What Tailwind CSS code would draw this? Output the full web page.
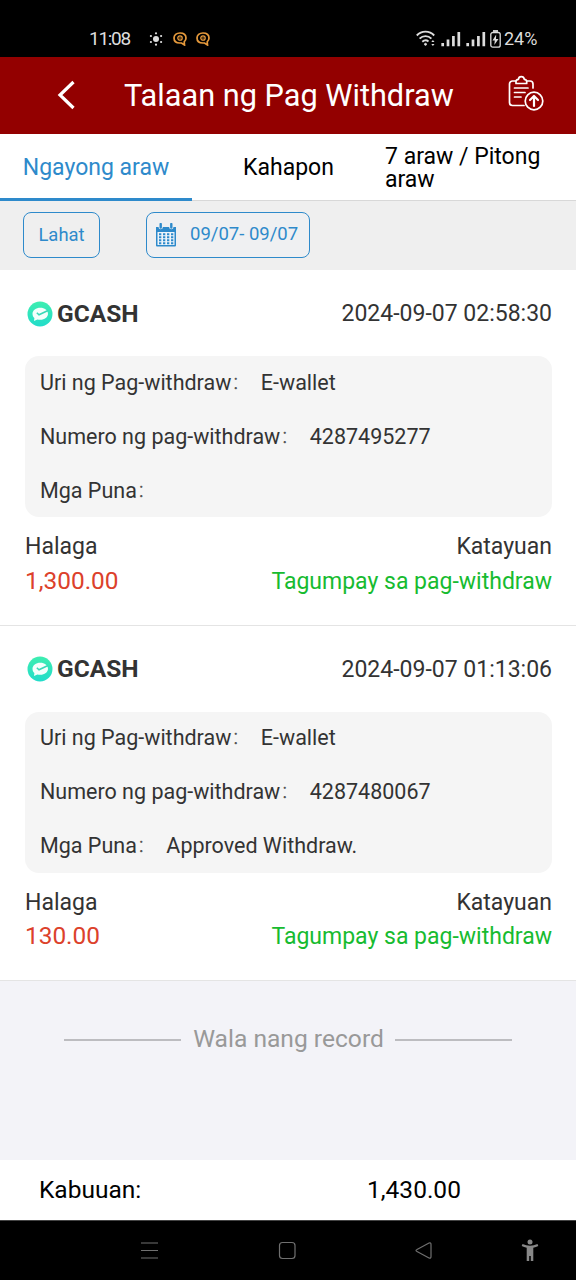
<!DOCTYPE html>
<html lang="fil">
<head>
<meta charset="utf-8">
<meta name="viewport" content="width=device-width, initial-scale=1">
<title>Talaan ng Pag Withdraw</title>
<script src="https://cdn.jsdelivr.net/npm/@tailwindcss/browser@4"></script>
</head>
<body class="w-[576px] h-[1280px] overflow-hidden bg-white font-['Roboto','Noto_Sans_CJK_SC',sans-serif] text-[#333] whitespace-nowrap">
<svg class="absolute w-0 h-0">
  <defs>
    <linearGradient id="mint" x1="0" y1="0" x2="0" y2="1"><stop offset="0" stop-color="#3eeeb0"/><stop offset="1" stop-color="#22dcca"/></linearGradient>
    <symbol id="wallet" viewBox="0 0 26 26">
      <circle cx="13" cy="13" r="12.5" fill="url(#mint)"/>
      <path d="M13.3 6.800c4.300 0 7.700 2.600 7.700 6s-3.400 6-7.700 6c-1 0-2-.1-2.900-.4L7 20l.4-2.900C6.200 16 5.500 14.500 5.500 12.800c0-3.400 3.500-6 7.800-6z" fill="#f4fffc"/>
      <path d="M9.800 11.800l2.200 2 9-4.300" fill="none" stroke="#3ad9b8" stroke-width="1.500"/>
    </symbol>
    <symbol id="chat" viewBox="0 0 14 14">
      <path d="M7 1C3.400 1 1 3 1 6s2.400 5 6 5h1.500l3 2-.3-3.200C12.400 8.800 13 7.500 13 6c0-3-2.400-5-6-5z" fill="none" stroke="#e69a3c" stroke-width="1.700"/>
      <circle cx="7" cy="6" r="2.200" fill="none" stroke="#e69a3c" stroke-width="1.300"/><circle cx="7" cy="6" r=".7" fill="#e69a3c"/>
    </symbol>
    <symbol id="bars" viewBox="0 0 20 16">
      <path d="M1.700 12v3.300M7 8.500v6.800M12.400 5v10.300M17.800 1v14.300" stroke="#ddd" stroke-width="2.700"/>
    </symbol>
  </defs>
</svg>

<div class="flex items-center h-[57px] bg-black text-[#ddd] pl-[89px] pt-5">
  <span class="text-[19px] leading-9 w-[60px] tracking-[-1.300px]">11:08</span>
  <svg class="w-[14px] h-[14px]" viewBox="0 0 14 14" fill="#ddd"><circle cx="7" cy="7" r="3"/><circle cx="7" cy="1.300" r="1.100"/><circle cx="7" cy="12.700" r="1.100"/><circle cx="1.900" cy="4" r="1.100"/><circle cx="12.100" cy="4" r="1.100"/><circle cx="1.900" cy="10" r="1.100"/><circle cx="12.100" cy="10" r="1.100"/></svg>
  <svg class="w-[14px] h-[14px] ml-[10px]"><use href="#chat"/></svg>
  <svg class="w-[14px] h-[14px] ml-[9px]"><use href="#chat"/></svg>
  <svg class="w-[20px] h-[17px] ml-[206px]" viewBox="0 0 20 17" fill="none" stroke="#ddd" stroke-width="1.900"><path d="M.8 5.500C5.500.3 13.500.3 18.200 5.500M3.600 8.700c3.300-3.400 8.500-3.400 11.800 0M6.300 11.700c2-1.800 4.400-1.800 6.200-.3"/><circle cx="9.500" cy="14.300" r="1" fill="#ddd" stroke-width="1"/><path d="M15.300 12l1.600-2 1.600 2zM15.300 14l1.600 2 1.600-2z" fill="#ddd" stroke="none"/></svg>
  <svg class="w-[20px] h-[16px] ml-[5px]"><use href="#bars"/></svg>
  <svg class="w-[20px] h-[16px] ml-[5px]"><use href="#bars"/></svg>
  <svg class="w-[11px] h-[18px] ml-[4px]" viewBox="0 0 11 18"><path d="M3 1h5" stroke="#ddd" stroke-width="1.800"/><rect x=".8" y="2.500" width="9.400" height="14.700" rx="2" fill="none" stroke="#ddd" stroke-width="1.300"/><path d="M6.200 4.500L2.500 10.500h2.300l-.5 4.500 4.200-6H6z" fill="#ddd"/></svg>
  <span class="text-[18px] leading-9 ml-[3px]">24%</span>
</div>

<header class="flex items-center h-[77px] bg-[#930000] text-white">
  <svg class="w-[18px] h-[30px] ml-[57px] mb-[2px]" viewBox="0 0 18 30" fill="none" stroke="#fff" stroke-width="3.200"><path d="M16.500 2L3 15l13.500 13"/></svg>
  <h1 class="ml-[49px] w-[384px] text-[30.700px] leading-[40px] font-normal">Talaan ng Pag Withdraw</h1>
  <svg class="w-[36px] h-[36px] mb-[6px]" viewBox="0 0 36 36" fill="none" stroke="#fff" stroke-width="1.700" stroke-linecap="round" stroke-linejoin="round"><path d="M8 6H4.500A3 3 0 0 0 1.500 9v18.500a3 3 0 0 0 3 3H16M18.500 6h3.500a3 3 0 0 1 3 3v4M8 8.500V6.300C8 5 9 4.500 10.400 4.300c.4-3.600 5.400-3.600 5.900 0 1.500.2 2.400.8 2.400 2v2.200zM6.500 13H20M6.500 17.500h10.500M6.500 22H13"/><circle cx="26" cy="26" r="8.800"/><path d="M26 31v-9M22 25l4-4 4 4" stroke-width="2.200"/></svg>
</header>

<nav class="grid grid-cols-3 h-[67px] bg-white border-b border-[#d8d8d8] text-black text-[23px] leading-[23px]">
  <div class="flex items-center justify-center text-[#2e8acb] border-b-3 border-[#2e8acb] h-[67px] pt-[2px]">Ngayong araw</div>
  <div class="flex items-center justify-center pl-px">Kahapon</div>
  <div class="flex items-center pl-[1px]"><span>7 araw / Pitong<br>araw</span></div>
</nav>

<div class="flex h-[69px] bg-[#efefef] pt-[11px] pl-[23px] text-[#2e8acb]">
  <button class="w-[77px] h-[46px] rounded-lg border border-[#2e8acb] text-[18.400px]">Lahat</button>
  <button class="flex items-center w-[164px] h-[46px] ml-[46px] pl-[8px] rounded-lg border border-[#2e8acb] bg-[#eff0f2] text-[18.500px]">
    <svg class="w-[22px] h-[24px]" viewBox="0 0 22 24"><path d="M1 4h2.500a2.200 2.200 0 0 0 4.400 0h6.200a2.200 2.200 0 0 0 4.400 0H21v18.500q0 1-1 1H2q-1 0-1-1z" fill="#2e8acb"/><path d="M2.500 9h17v13h-17z" fill="#eef4fa"/><path d="M5.700 1v3.500M16.300 1v3.500" stroke="#2e8acb" stroke-width="2.400" stroke-linecap="round"/><path d="M4 11.200h14.500M4 14.200h14.500M4 17.200h14.500M4 20.200h14.500" stroke="#2e8acb" stroke-width="2" stroke-dasharray="2.300 1.700"/></svg>
    <span class="ml-[13px]">09/07- 09/07</span>
  </button>
</div>

<section class="h-[356px] border-b border-[#e4e4e4] px-[24px]">
  <div class="flex items-center justify-between h-[86px] pt-[2px]">
    <div class="flex items-center"><svg class="w-[26px] h-[26px] ml-[3px] mr-[4px]"><use href="#wallet"/></svg><b class="text-[24.500px]">GCASH</b></div>
    <span class="text-[23px] pt-px">2024-09-07 02:58:30</span>
  </div>
  <div class="h-[161px] ml-px rounded-[14px] bg-[#f5f5f5] pl-[15px] text-[21.500px] leading-[54px]">
    <p class="h-[54px] flex"><span>Uri ng Pag-withdraw</span><i class="not-italic font-light text-[18px] text-[#555] w-[29.500px]">：</i><span>E-wallet</span></p>
    <p class="h-[54px] flex"><span>Numero ng pag-withdraw</span><i class="not-italic font-light text-[18px] text-[#555] w-[29.500px]">：</i><span>4287495277</span></p>
    <p class="h-[54px] flex"><span>Mga Puna</span><i class="not-italic font-light text-[18px] text-[#555] w-[29.500px]">：</i></p>
  </div>
  <div class="flex justify-between pl-px pt-[12px] text-[23px] leading-[35px]"><span>Halaga</span><span>Katayuan</span></div>
  <div class="flex justify-between pl-px text-[23px] leading-[35px]"><span class="text-[#dc412b] text-[24.400px] leading-[33px]">1,300.00</span><span class="text-[#17bb30]">Tagumpay sa pag-withdraw</span></div>
</section>

<section class="h-[355px] border-b border-[#e4e4e4] px-[24px]">
  <div class="flex items-center justify-between h-[86px]">
    <div class="flex items-center"><svg class="w-[26px] h-[26px] ml-[3px] mr-[4px]"><use href="#wallet"/></svg><b class="text-[24.500px]">GCASH</b></div>
    <span class="text-[23px] pt-[2px]">2024-09-07 01:13:06</span>
  </div>
  <div class="h-[161px] ml-px rounded-[14px] bg-[#f5f5f5] pl-[15px] text-[21.500px] leading-[52px]">
    <p class="h-[54px] flex"><span>Uri ng Pag-withdraw</span><i class="not-italic font-light text-[18px] text-[#555] w-[29.500px]">：</i><span>E-wallet</span></p>
    <p class="h-[54px] flex"><span>Numero ng pag-withdraw</span><i class="not-italic font-light text-[18px] text-[#555] w-[29.500px]">：</i><span>4287480067</span></p>
    <p class="h-[54px] flex"><span>Mga Puna</span><i class="not-italic font-light text-[18px] text-[#555] w-[29.500px]">：</i><span>Approved Withdraw.</span></p>
  </div>
  <div class="flex justify-between pl-px pt-[12px] text-[23px] leading-[35px]"><span>Halaga</span><span>Katayuan</span></div>
  <div class="flex justify-between pl-px text-[23px] leading-[33px]"><span class="text-[#dc412b] text-[24.400px] leading-[32px]">130.00</span><span class="text-[#17bb30]">Tagumpay sa pag-withdraw</span></div>
</section>

<div class="h-[179px] bg-[#f3f3f8] flex justify-center items-start pt-[42px] text-[24.600px] leading-[32px] text-[#999]">
  <div class="h-[2px] w-[117px] mt-[16px] bg-[#bcbcc0]"></div><span class="w-[214px] pl-px text-center">Wala nang record</span><div class="h-[2px] w-[117px] mt-[16px] bg-[#bcbcc0]"></div>
</div>

<footer class="flex items-center h-[60px] bg-white text-black text-[24.500px]"><span class="ml-[39px] w-[328px]">Kabuuan:</span><span>1,430.00</span></footer>

<div class="h-[60px] bg-black border-t border-[#444]">
  <svg class="w-[576px] h-[59px]" viewBox="0 1 576 59" fill="none" stroke="#707070" stroke-width="1.200"><path d="M141 23h17M141 30.500h17M141 38h17"/><rect x="279.500" y="22.500" width="15.500" height="16" rx="3"/><path d="M417 29.500l12-6.500q2-.7 2 1.500v12q0 2.200-2 1.500l-12-6.500q-2-1 0-2z"/><g fill="#888" stroke="none"><circle cx="530" cy="22" r="2.500"/><path d="M522.500 24q7.500 3.500 15 0l.8 2q-2.300 1.300-5 1.800V41h-2.500v-5h-1.600v5h-2.500V27.800q-2.700-.5-5-1.800z"/></g></svg>
</div>
</body>
</html>
